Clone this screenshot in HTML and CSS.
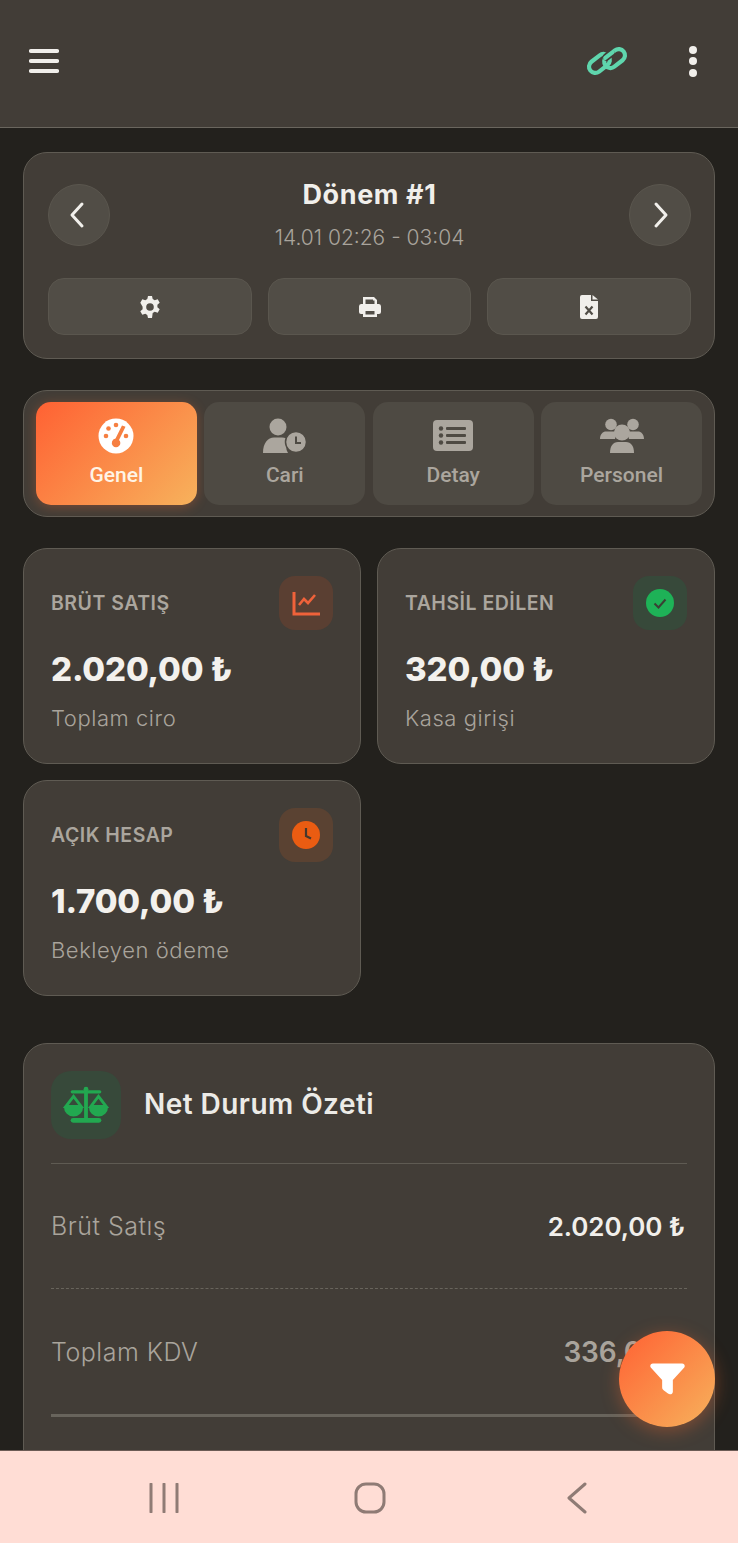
FILE: index.html
```html
<!DOCTYPE html>
<html lang="tr">
<head>
<meta charset="utf-8">
<title>Dönem</title>
<link rel="stylesheet" href="styles.css">
</head>
<body>
<div class="screen">
  <header class="topbar">
    <svg class="ico-menu" viewBox="0 0 30 26"><path d="M2 3h26M2 13h26M2 23h26"/></svg>
    <div class="topbar-right">
      <svg class="ico-link" viewBox="0 0 44 36"><g fill="none" stroke-linecap="round" transform="rotate(-38 22 18)"><rect x="3" y="9" width="23" height="12.500" rx="6.250" stroke="#5fd6ad" stroke-width="4.200"/><rect x="18" y="14.500" width="23" height="12.500" rx="6.250" stroke="#5fd6ad" stroke-width="4.200"/><path d="M24 14.500H30" stroke="#423d37" stroke-width="7.500"/><path d="M22.500 14.500H32" stroke="#5fd6ad" stroke-width="4.200"/></g></svg>
      <div class="dots"><i></i><i></i><i></i></div>
    </div>
  </header>

  <main class="content">
    <section class="card period">
      <div class="period-head">
        <button class="round prev"><svg viewBox="0 0 16 28"><path d="M13 3 3 14l10 11"/></svg></button>
        <div class="period-title">
          <h1>Dönem #1</h1>
          <p>14.01 02:26 - 03:04</p>
        </div>
        <button class="round next"><svg viewBox="0 0 16 28"><path d="M3 3l10 11L3 25"/></svg></button>
      </div>
      <div class="actions">
        <button class="action"><svg class="ico-gear" viewBox="0 0 24 24"><path fill-rule="evenodd" d="M10 1h4l.7 3.100 2 1.100 3-1 2 3.500-2.300 2.100v2.400l2.300 2.100-2 3.500-3-1-2 1.100L14 23h-4l-.7-3.100-2-1.100-3 1-2-3.500 2.300-2.100v-2.400L2.300 7.700l2-3.500 3 1 2-1.100zM12 8.200a3.800 3.800 0 1 0 0 7.600 3.800 3.800 0 0 0 0-7.600z"/></svg></button>
        <button class="action"><svg class="ico-print" viewBox="0 0 24 24"><path fill-rule="evenodd" d="M5 2h11l3 3v4h2a2.500 2.500 0 0 1 2 2.500V17a2 2 0 0 1-2 2h-2v3H5v-3H3a2 2 0 0 1-2-2v-5.500A2.500 2.500 0 0 1 3 9h2zM7.500 4.500V9h9V5.500h-1.500v-1zM7.500 16v3.500h9V16z"/></svg></button>
        <button class="action"><svg class="ico-file" viewBox="0 0 18 24"><path d="M2 0h9v6h7v16a2 2 0 0 1-2 2H2a2 2 0 0 1-2-2V2a2 2 0 0 1 2-2zM12.500 0 18 4.500h-5.500z"/><path class="x" d="M5.500 11.500l7 8M12.500 11.500l-7 8"/></svg></button>
      </div>
    </section>

    <nav class="card tabs">
      <div class="tab active">
        <svg viewBox="0 0 36 36"><circle cx="18" cy="18" r="17.500" fill="#fff"/><g fill="#f67f41"><circle cx="8" cy="18" r="2.300"/><circle cx="10.500" cy="10.500" r="2.300"/><circle cx="18" cy="7" r="2.300"/><circle cx="28" cy="18" r="2.300"/><path d="M24 7.500l3.500 1.300L21 22a4 4 0 0 1 0 6 4.200 4.200 0 0 1-6 0 4.500 4.500 0 0 1 2.500-7.500z"/></g></svg>
        <span>Genel</span>
      </div>
      <div class="tab">
        <svg viewBox="0 0 44 36"><circle cx="15" cy="9" r="8.500"/><path d="M0 35c0-10 5-15.500 11-15.500h8c3 0 5 1 6.500 2.500A12 12 0 0 0 25 35z"/><circle cx="33" cy="24" r="10.500" stroke="#4e4a43" stroke-width="1.500"/><path d="M33 18.500V25h5" fill="none" stroke="#4e4a43" stroke-width="2"/></svg>
        <span>Cari</span>
      </div>
      <div class="tab">
        <svg class="ico-list" viewBox="0 0 40 32"><rect width="40" height="31" rx="4"/><g fill="#4e4a43"><circle cx="8" cy="8.500" r="2.200"/><circle cx="8" cy="15.500" r="2.200"/><circle cx="8" cy="22.500" r="2.200"/><rect x="13" y="7" width="20" height="3" rx="1"/><rect x="13" y="14" width="20" height="3" rx="1"/><rect x="13" y="21" width="20" height="3" rx="1"/></g></svg>
        <span>Detay</span>
      </div>
      <div class="tab">
        <svg viewBox="0 0 44 36"><circle cx="11" cy="6.500" r="5.800"/><circle cx="33" cy="6.500" r="5.800"/><path d="M0 21c0-5 3-7.500 6-7.500h10c1 0 2 .3 2 1A10 10 0 0 0 15 21z"/><path d="M44 21c0-5-3-7.500-6-7.500H28c-1 0-2 .3-2 1A10 10 0 0 1 29 21z"/><circle cx="22" cy="14.500" r="8"/><path d="M10 35c0-7 3-11 8-11h8c5 0 8 4 8 11z"/></svg>
        <span>Personel</span>
      </div>
    </nav>

    <section class="stats">
      <article class="card stat">
        <div class="stat-head">
          <h2>BRÜT SATIŞ</h2>
          <div class="stat-ico ico-orange"><svg viewBox="0 0 28 26"><path d="M2 2v22h26" fill="none" stroke="#f0623a" stroke-width="3"/><path d="M7 15l5-6 4 4 7-8" fill="none" stroke="#f0623a" stroke-width="2.600"/></svg></div>
        </div>
        <div class="stat-value">2.020,00 ₺</div>
        <div class="stat-sub">Toplam ciro</div>
      </article>
      <article class="card stat">
        <div class="stat-head">
          <h2>TAHSİL EDİLEN</h2>
          <div class="stat-ico ico-green"><svg viewBox="0 0 28 28"><circle cx="14" cy="14" r="14" fill="#1eb257"/><path d="M8.500 14.500l4 4 7-8" fill="none" stroke="#3a3f34" stroke-width="2"/></svg></div>
        </div>
        <div class="stat-value">320,00 ₺</div>
        <div class="stat-sub">Kasa girişi</div>
      </article>
      <article class="card stat">
        <div class="stat-head">
          <h2>AÇIK HESAP</h2>
          <div class="stat-ico ico-amber"><svg viewBox="0 0 28 28"><circle cx="14" cy="14" r="14" fill="#ea5c12"/><path d="M14 7v8l5 2.500" fill="none" stroke="#46382c" stroke-width="2.200"/></svg></div>
        </div>
        <div class="stat-value">1.700,00 ₺</div>
        <div class="stat-sub">Bekleyen ödeme</div>
      </article>
    </section>

    <section class="card summary">
      <div class="summary-head">
        <div class="summary-ico"><svg viewBox="0 0 48 38"><g fill="#22a850"><rect x="8" y="3.500" width="32" height="3.500" rx="1.700"/><circle cx="24" cy="2.500" r="2.500"/><rect x="22" y="3" width="4" height="30"/><rect x="8" y="32.500" width="32" height="5" rx="2.500"/></g><g fill="none" stroke="#22a850" stroke-width="3"><path d="M11 10 3 20.500h16z"/><path d="M37 10l-8 10.500h16z"/></g><path fill="#22a850" d="M1 21h20a10 10 0 0 1-20 0zM27 21h20a10 10 0 0 1-20 0z"/></svg></div>
        <h2>Net Durum Özeti</h2>
      </div>
      <div class="row row-dash"><span>Brüt Satış</span><b class="bright">2.020,00 ₺</b></div>
      <div class="row row-solid"><span>Toplam KDV</span><b>336,00 ₺</b></div>
    </section>
  </main>

  <button class="fab"><svg viewBox="0 0 36 32"><path d="M3 0h30c2.500 0 3.500 2.500 2 4.500L23.500 17v12c0 2.500-3 3.500-5 2L14 27.500c-1-.8-1.500-1.500-1.500-3V17L1 4.500C-.5 2.500.5 0 3 0z"/></svg></button>

  <footer class="sysnav">
    <svg class="sys-recent" viewBox="0 0 30 30"><path d="M2 1v28M15 1v28M28 1v28"/></svg>
    <svg class="sys-home" viewBox="0 0 32 32"><rect x="2" y="2" width="28" height="28" rx="10"/></svg>
    <svg class="sys-back" viewBox="0 0 20 32"><path d="M18 2 2 16l16 14"/></svg>
  </footer>
</div>
</body>
</html>
```
FILE: styles.css
```css
* { box-sizing: border-box; margin: 0; padding: 0; }
html, body { width: 738px; height: 1543px; overflow: hidden; }
body { background: #23211d; font-family: Inter, "Noto Sans", sans-serif; color: #f1efeb; }
button { border: 0; font: inherit; color: inherit; display: flex; align-items: center; justify-content: center; }
h1, h2 { font-weight: 600; }

.screen { position: relative; width: 738px; height: 1543px; display: flex; flex-direction: column; overflow: hidden; }

.topbar { flex: none; height: 128px; background: #423d37; border-bottom: 1px solid #6a665e; display: flex; align-items: center; justify-content: space-between; padding: 0 41px 5px 29px; }
.ico-menu { width: 30px; height: 26px; fill: none; stroke: #f1efeb; stroke-width: 4.200; stroke-linecap: round; }
.topbar-right { display: flex; align-items: center; gap: 60px; }
.ico-link { width: 44px; height: 36px; }
.dots { display: flex; flex-direction: column; gap: 3.500px; }
.dots i { display: block; width: 8px; height: 8px; border-radius: 50%; background: #f1efeb; }

.content { flex: 1; min-height: 0; overflow: hidden; padding: 24px 23px 0; display: flex; flex-direction: column; }
.card { background: #423d37; border: 1.500px solid #5f5b53; border-radius: 24px; }

.period { height: 207px; padding: 31px 23px 0 24px; flex: none; }
.period-head { display: flex; justify-content: space-between; align-items: flex-start; }
.round { width: 62px; height: 62px; border-radius: 50%; background: #514d46; border: 1px solid #5a564e; }
.round.prev { padding-right: 5px; }
.round.next { padding-left: 3px; }
.round svg { width: 16px; height: 28px; fill: none; stroke: #f1efeb; stroke-width: 3; stroke-linecap: round; stroke-linejoin: round; }
.period-title { text-align: center; margin-top: -6px; }
.period-title h1 { font-size: 27px; line-height: 34px; font-weight: 700; letter-spacing: .6px; color: #f1efeb; }
.period-title p { font-size: 21px; line-height: 28px; margin-top: 12px; font-weight: 300; color: #a9a49c; letter-spacing: 0; }
.actions { display: flex; gap: 16px; margin-top: 26px; }
.action { flex: 1; height: 57px; background: #514d46; border: 1px solid #5a564e; border-radius: 16px; }
.action svg { fill: #f1efeb; }
.ico-gear { width: 24px; height: 24px; }
.ico-print { width: 24px; height: 24px; }
.ico-file { width: 18px; height: 24px; }
.ico-file .x { fill: none; stroke: #514d46; stroke-width: 2.200; }

.tabs { flex: none; height: 127px; margin-top: 31px; padding: 10.500px 12px 11.500px; display: grid; grid-template-columns: repeat(4, 1fr); gap: 7.500px; }
.tab { border-radius: 15px; background: #4e4a43; display: flex; flex-direction: column; align-items: center; padding-top: 16px; font-family: Roboto, sans-serif; font-weight: 500; font-size: 21px; line-height: 26px; color: #aba69e; }
.tab svg { height: 36px; width: 44px; fill: #aba69e; margin-bottom: 8px; }
.tab svg.ico-list { width: 40px; height: 32px; margin: 2px 0 10px; }
.tab.active { background: linear-gradient(135deg, #ff6133 0%, #f7b25c 100%); color: #fff4e6; box-shadow: 0 2px 12px rgba(255, 110, 50, .3); }

.stats { flex: none; margin-top: 31px; display: grid; grid-template-columns: repeat(2, 338px); gap: 16px; }
.stat { height: 216px; padding: 27px 27px 0 27px; }
.stat-head { display: flex; justify-content: space-between; align-items: center; height: 54px; }
.stat h2 { font-size: 19.500px; font-weight: 600; color: #aba69e; letter-spacing: .5px; }
.stat-ico { width: 54px; height: 54px; border-radius: 16px; display: flex; align-items: center; justify-content: center; }
.stat-ico svg { width: 28px; height: 28px; }
.ico-orange { background: #5a3f32; }
.ico-green { background: #37493a; }
.ico-amber { background: #5a4232; }
.stat-value { font-size: 33px; line-height: 40px; font-weight: 800; margin-top: 19px; color: #f3f1ed; letter-spacing: -.15px; }
.stat-sub { font-size: 22px; line-height: 30px; margin-top: 14px; font-weight: 300; color: #a9a49c; letter-spacing: .55px; }

.summary { flex: none; height: 500px; margin-top: 47px; padding: 27px 27px 0; }
.summary-head { display: flex; align-items: center; gap: 23px; padding-bottom: 24px; border-bottom: 1px solid #5f5b53; }
.summary-ico { width: 70px; height: 68px; border-radius: 20px; background: #37493a; display: flex; align-items: center; justify-content: center; }
.summary-ico svg { width: 46px; height: 38px; }
.summary-head h2 { font-size: 28px; font-weight: 600; color: #ecebe7; letter-spacing: .45px; margin-top: -2px; }
.row { display: flex; align-items: center; justify-content: space-between; font-size: 25px; font-weight: 300; color: #a9a49c; letter-spacing: .5px; padding-right: 2px; }
.row b { font-size: 26px; font-weight: 600; letter-spacing: -.1px; }
.row b.bright { color: #f1efeb; }
.row-solid b { font-size: 28px; }
.row-dash { height: 125px; border-bottom: 1px dashed #68645c; }
.row-solid { height: 128px; border-bottom: 3px solid #68645c; }

.fab { position: absolute; left: 619px; top: 1331px; width: 96px; height: 96px; border-radius: 50%; background: linear-gradient(135deg, #ff6133 0%, #f7b25c 100%); box-shadow: 0 4px 18px rgba(255, 110, 50, .35); }
.fab svg { width: 35px; height: 32px; fill: #fff; }

.sysnav { flex: none; position: relative; height: 93px; background: #ffddd5; border-top: 1px solid #6c5b55; display: grid; grid-template-columns: 328px 84px 1fr; align-items: center; padding-top: 2px; }
.sysnav svg { fill: none; stroke: #8f7b75; stroke-linecap: round; stroke-linejoin: round; }
.sys-recent { width: 30px; height: 30px; stroke-width: 3; margin-left: 149px; }
.sys-home { width: 32px; height: 32px; stroke-width: 3; margin-left: 26px; }
.sys-back { width: 20px; height: 32px; stroke-width: 3; margin-left: 155px; }
```
